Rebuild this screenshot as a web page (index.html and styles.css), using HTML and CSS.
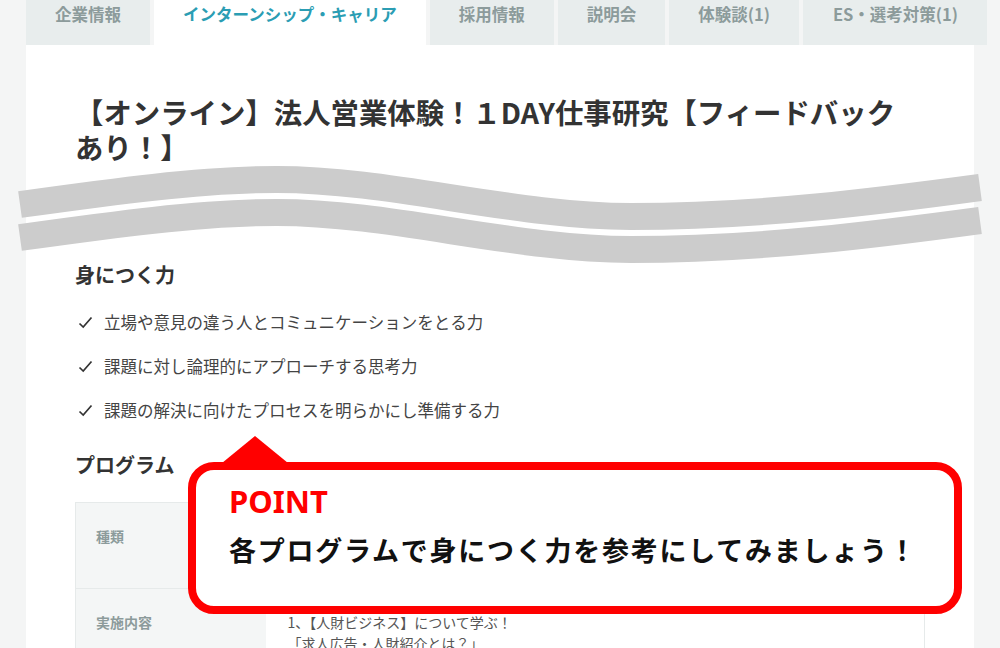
FILE: index.html
```html
<!DOCTYPE html>
<html lang="ja">
<head>
<meta charset="utf-8">
<title>インターンシップ・キャリア</title>
<link rel="stylesheet" href="styles.css">
</head>
<body>
<nav class="tabs">
  <div class="tab">企業情報</div>
  <div class="tab active">インターンシップ・キャリア</div>
  <div class="tab">採用情報</div>
  <div class="tab">説明会</div>
  <div class="tab">体験談(1)</div>
  <div class="tab last">ES・選考対策(1)</div>
</nav>
<main class="card">
  <h1 class="title">【オンライン】法人営業体験！１DAY仕事研究【フィードバックあり！】</h1>
  <div class="omit">
    <svg class="waves" width="1000" height="110" viewBox="0 0 1000 110">
      <path d="M20,45.5 C110,33 200,20.5 277,20.5 C390,20.5 515,57.5 631,57.5 C760,57.5 880,42 980,28.5" fill="none" stroke="#cccccc" stroke-width="27"/>
      <path d="M20,78.5 C110,66 200,53.5 277,53.5 C390,53.5 515,90.5 631,90.5 C760,90.5 880,75 980,61.5" fill="none" stroke="#cccccc" stroke-width="27"/>
    </svg>
  </div>
  <h2 class="heading">身につく力</h2>
  <ul class="skills">
    <li><svg class="check" width="15" height="13" viewBox="0 0 15 13"><path d="M1.5,7.5 L5.2,11 L13.5,1.5" fill="none" stroke="#333" stroke-width="1.7"/></svg><span>立場や意見の違う人とコミュニケーションをとる力</span></li>
    <li><svg class="check" width="15" height="13" viewBox="0 0 15 13"><path d="M1.5,7.5 L5.2,11 L13.5,1.5" fill="none" stroke="#333" stroke-width="1.7"/></svg><span>課題に対し論理的にアプローチする思考力</span></li>
    <li><svg class="check" width="15" height="13" viewBox="0 0 15 13"><path d="M1.5,7.5 L5.2,11 L13.5,1.5" fill="none" stroke="#333" stroke-width="1.7"/></svg><span>課題の解決に向けたプロセスを明らかにし準備する力</span></li>
  </ul>
  <h2 class="heading program-heading">プログラム</h2>
  <table class="program">
    <tr class="row-kind">
      <th>種類</th>
      <td></td>
    </tr>
    <tr>
      <th>実施内容</th>
      <td>1、【人財ビジネス】について学ぶ！<br>「求人広告・人財紹介とは？」</td>
    </tr>
  </table>
  <div class="callout">
    <div class="point">POINT</div>
    <div class="message">各プログラムで身につく力を参考にしてみましょう！</div>
  </div>
</main>
</body>
</html>
```
FILE: styles.css
```css
* { box-sizing: border-box; }
html, body { margin: 0; padding: 0; }
body {
  width: 1000px;
  height: 648px;
  overflow: hidden;
  background: #f4f5f5;
  font-family: "Noto Sans CJK JP", "Noto Sans", sans-serif;
  color: #333;
}
.tabs {
  display: flex;
  gap: 4px;
  margin: 0 26px;
  height: 45px;
}
.tab {
  flex: none;
  height: 45px;
  padding: 0 29px;
  line-height: 29px;
  font-size: 16.5px;
  font-weight: 700;
  color: #8c9b9b;
  background: #e8eded;
  white-space: nowrap;
}
.tab.active {
  background: #fff;
  color: #2b9db3;
}
.tab.last { flex: 1; padding-left: 30px; }
.card {
  position: relative;
  margin: 0 26px;
  min-height: 603px;
  background: #fff;
  padding: 49px 49px 0;
}
.title {
  margin: 0;
  padding-right: 12px;
  font-size: 28.4px;
  line-height: 35px;
  font-weight: 700;
  color: #333;
}
.omit {
  position: relative;
  height: 96px;
}
.waves {
  position: absolute;
  left: -75px;
  top: -5px;
}
.heading {
  margin: 0;
  font-size: 20px;
  line-height: 30px;
  font-weight: 700;
  color: #333;
}
.skills {
  list-style: none;
  margin: 19px 0 0;
  padding: 0;
}
.skills li {
  display: flex;
  align-items: center;
  gap: 11px;
  margin-bottom: 18px;
  padding-left: 3px;
  font-size: 16.5px;
  line-height: 26px;
  color: #444;
}
.program-heading { margin-top: 27px; }
.program {
  margin-top: 22px;
  width: 100%;
  border-collapse: collapse;
  border: 1px solid #e6eaea;
}
.program th,
.program td {
  vertical-align: top;
  text-align: left;
  font-size: 14px;
  line-height: 21px;
  border-bottom: 1px solid #e6eaea;
}
.program th {
  width: 190px;
  padding: 23px 20px;
  background: #f4f6f6;
  color: #8c9b9b;
  font-weight: 700;
}
.program td {
  padding: 23px 22px;
  color: #555;
}
.row-kind th, .row-kind td { height: 86px; }
.callout {
  position: absolute;
  left: 162px;
  top: 417px;
  width: 774px;
  height: 152px;
  border: 8px solid #ff0000;
  border-radius: 26px;
  background: #fff;
  padding: 12px 0 0 33px;
}
.callout::before {
  content: "";
  position: absolute;
  left: 26px;
  top: -34px;
  width: 0;
  height: 0;
  border-left: 33px solid transparent;
  border-right: 33px solid transparent;
  border-bottom: 27px solid #ff0000;
}
.point {
  font-family: "Noto Sans", sans-serif;
  font-size: 31px;
  line-height: 38px;
  font-weight: 700;
  color: #ff0000;
}
.message {
  margin-top: 11px;
  font-size: 27px;
  line-height: 38px;
  font-weight: 700;
  letter-spacing: 1.75px;
  color: #111;
  white-space: nowrap;
}
```
